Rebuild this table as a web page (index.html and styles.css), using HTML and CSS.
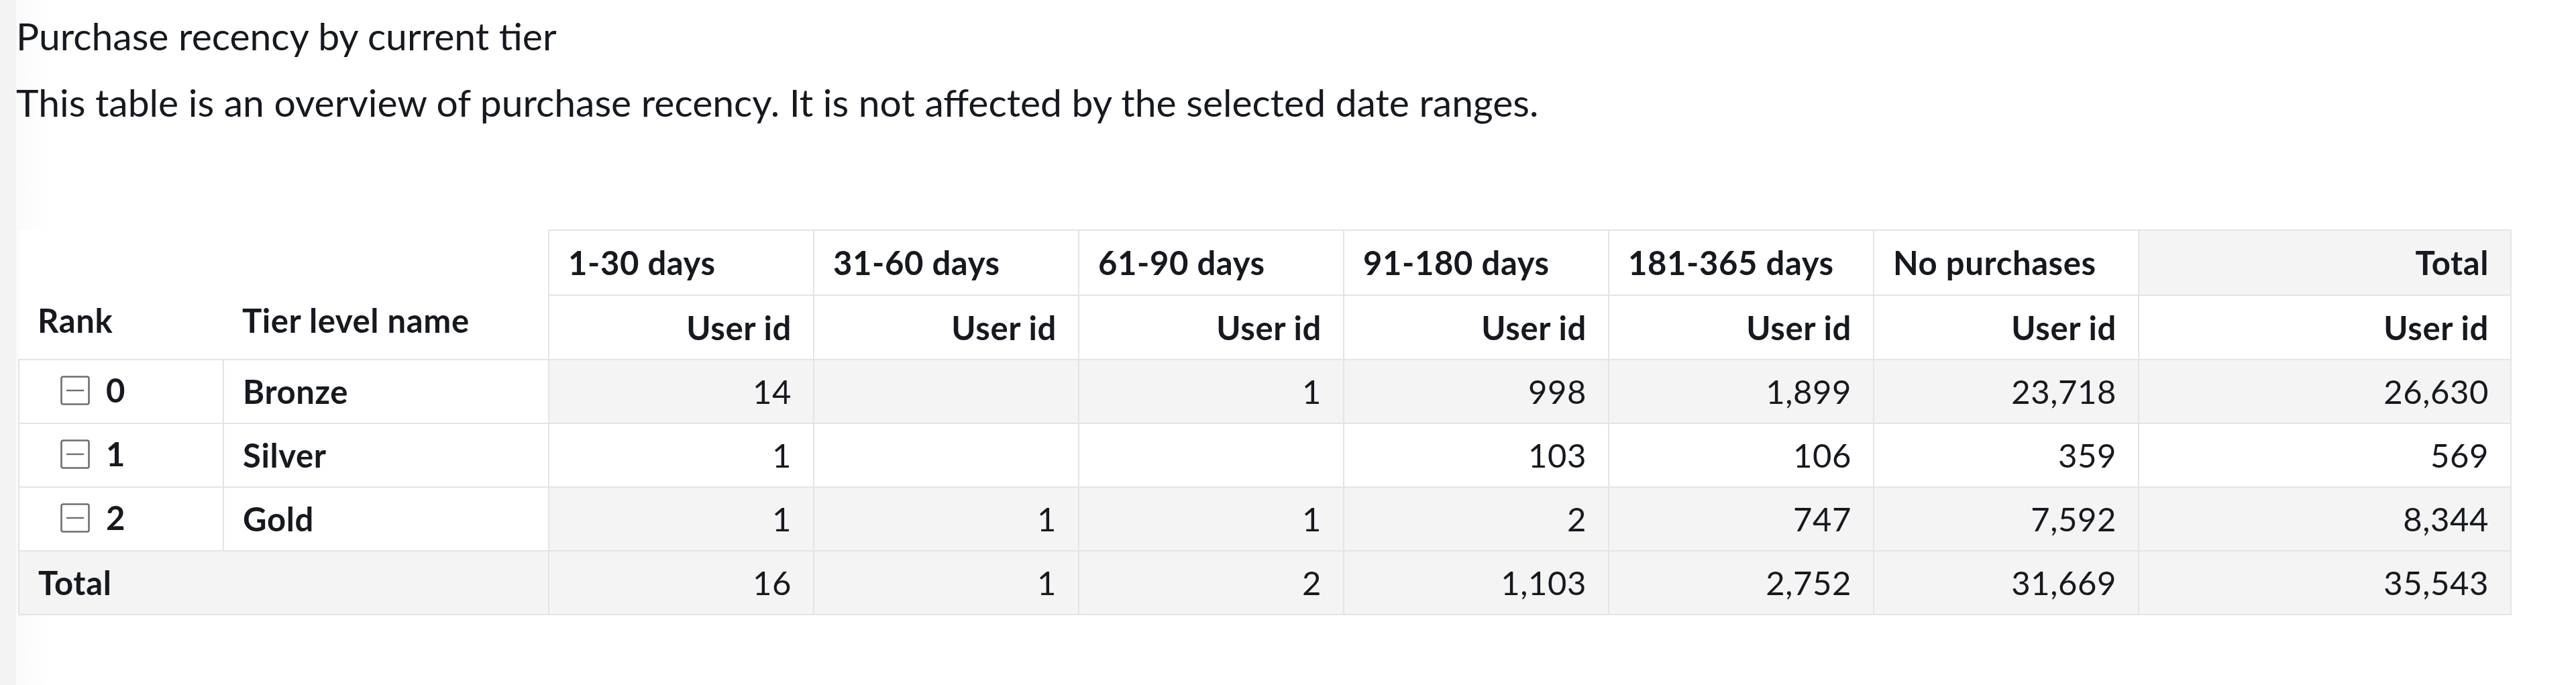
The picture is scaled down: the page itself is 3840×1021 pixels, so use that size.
FILE: index.html
```html
<!DOCTYPE html>
<html lang="en">
<head>
<meta charset="utf-8">
<title>Purchase recency by current tier</title>
<link rel="stylesheet" href="styles.css">
</head>
<body>
<div class="page">
  <header class="visual-header">
    <h1 class="title">Purchase recency by current tier</h1>
    <p class="subtitle">This table is an overview of purchase recency. It is not affected by the selected date ranges.</p>
  </header>
  <table class="pivot">
    <colgroup>
      <col class="c-rank"><col class="c-tier">
      <col class="c-val"><col class="c-val"><col class="c-val"><col class="c-val"><col class="c-val"><col class="c-val">
      <col class="c-total">
    </colgroup>
    <thead>
      <tr class="hrow1">
        <th class="corner corner-rank" rowspan="2">Rank</th>
        <th class="corner corner-tier" rowspan="2">Tier level name</th>
        <th class="grp">1-30 days</th>
        <th class="grp">31-60 days</th>
        <th class="grp">61-90 days</th>
        <th class="grp">91-180 days</th>
        <th class="grp">181-365 days</th>
        <th class="grp">No purchases</th>
        <th class="grp grp-total">Total</th>
      </tr>
      <tr class="hrow2">
        <th class="measure">User id</th>
        <th class="measure">User id</th>
        <th class="measure">User id</th>
        <th class="measure">User id</th>
        <th class="measure">User id</th>
        <th class="measure">User id</th>
        <th class="measure">User id</th>
      </tr>
    </thead>
    <tbody>
      <tr class="odd">
        <th class="rank"><span class="rank-in"><svg class="collapse" viewBox="0 0 44 44" width="44" height="44" aria-hidden="true"><rect x="1.5" y="1.5" width="41" height="41" rx="2.5"/><line x1="9" y1="22" x2="35" y2="22"/></svg><span>0</span></span></th>
        <th class="tier">Bronze</th>
        <td>14</td><td></td><td>1</td><td>998</td><td>1,899</td><td>23,718</td><td>26,630</td>
      </tr>
      <tr class="even">
        <th class="rank"><span class="rank-in"><svg class="collapse" viewBox="0 0 44 44" width="44" height="44" aria-hidden="true"><rect x="1.5" y="1.5" width="41" height="41" rx="2.5"/><line x1="9" y1="22" x2="35" y2="22"/></svg><span>1</span></span></th>
        <th class="tier">Silver</th>
        <td>1</td><td></td><td></td><td>103</td><td>106</td><td>359</td><td>569</td>
      </tr>
      <tr class="odd">
        <th class="rank"><span class="rank-in"><svg class="collapse" viewBox="0 0 44 44" width="44" height="44" aria-hidden="true"><rect x="1.5" y="1.5" width="41" height="41" rx="2.5"/><line x1="9" y1="22" x2="35" y2="22"/></svg><span>2</span></span></th>
        <th class="tier">Gold</th>
        <td>1</td><td>1</td><td>1</td><td>2</td><td>747</td><td>7,592</td><td>8,344</td>
      </tr>
      <tr class="total">
        <th class="total-label" colspan="2">Total</th>
        <td>16</td><td>1</td><td>2</td><td>1,103</td><td>2,752</td><td>31,669</td><td>35,543</td>
      </tr>
    </tbody>
  </table>
</div>
</body>
</html>
```

FILE: styles.css
```css
* { box-sizing: border-box; }

html, body {
  margin: 0;
  padding: 0;
  background: #ffffff;
}

body {
  font-family: "Lato", "Open Sans", sans-serif;
  color: #16191f;
}

.page {
  min-height: 1021px;
  padding: 20px 0 0 24px;
  background: linear-gradient(to right, #f3f3f3 0, #f3f3f3 23px, #fafafa 24px, #ffffff 72px);
}

.title,
.subtitle {
  margin: 0;
  font-size: 57px;
  font-weight: 400;
  line-height: 66px;
  white-space: nowrap;
}

.subtitle {
  margin-top: 33px;
}

.pivot {
  margin-top: 157px;
  margin-left: 3px;
  width: 3715px;
  table-layout: fixed;
  border-collapse: collapse;
  font-size: 49px;
  letter-spacing: 0.6px;
  line-height: 1.2;
}

.c-rank { width: 305px; }
.c-tier { width: 485px; }
.c-val { width: 395px; }
.c-total { width: 555px; }

.pivot th,
.pivot td {
  border: 2px solid #e4e4e4;
  padding: 0 32px 0 28px;
  white-space: nowrap;
  vertical-align: middle;
}

.pivot th { font-weight: 700; text-align: left; }
.pivot td { font-weight: 400; text-align: right; }

.hrow1 { height: 97px; }
.hrow2 { height: 96px; }
.pivot tbody tr { height: 95px; }

.corner {
  border-top: none !important;
  border-left: none !important;
  vertical-align: bottom !important;
  padding-bottom: 28px !important;
  background: #ffffff;
}
.corner-rank { border-right: none !important; }
.corner-tier { border-left: none !important; }

.grp { background: #ffffff; }
.grp-total { background: #f4f4f4; text-align: right !important; }

.measure { text-align: right !important; background: #ffffff; }

.rank { background: #ffffff; border-right: 2px solid #e4e4e4; }
.tier { background: #ffffff; }

.rank-in {
  display: inline-flex;
  align-items: center;
  gap: 24px;
  margin-left: 33px;
}

.collapse {
  display: block;
  fill: none;
  stroke: #6e6e6e;
}
.collapse rect { stroke-width: 2.6; }
.collapse line { stroke-width: 2.4; }

.odd td { background: #f4f4f4; }
.even td { background: #ffffff; }

.total th,
.total td { background: #f4f4f4; }
```
